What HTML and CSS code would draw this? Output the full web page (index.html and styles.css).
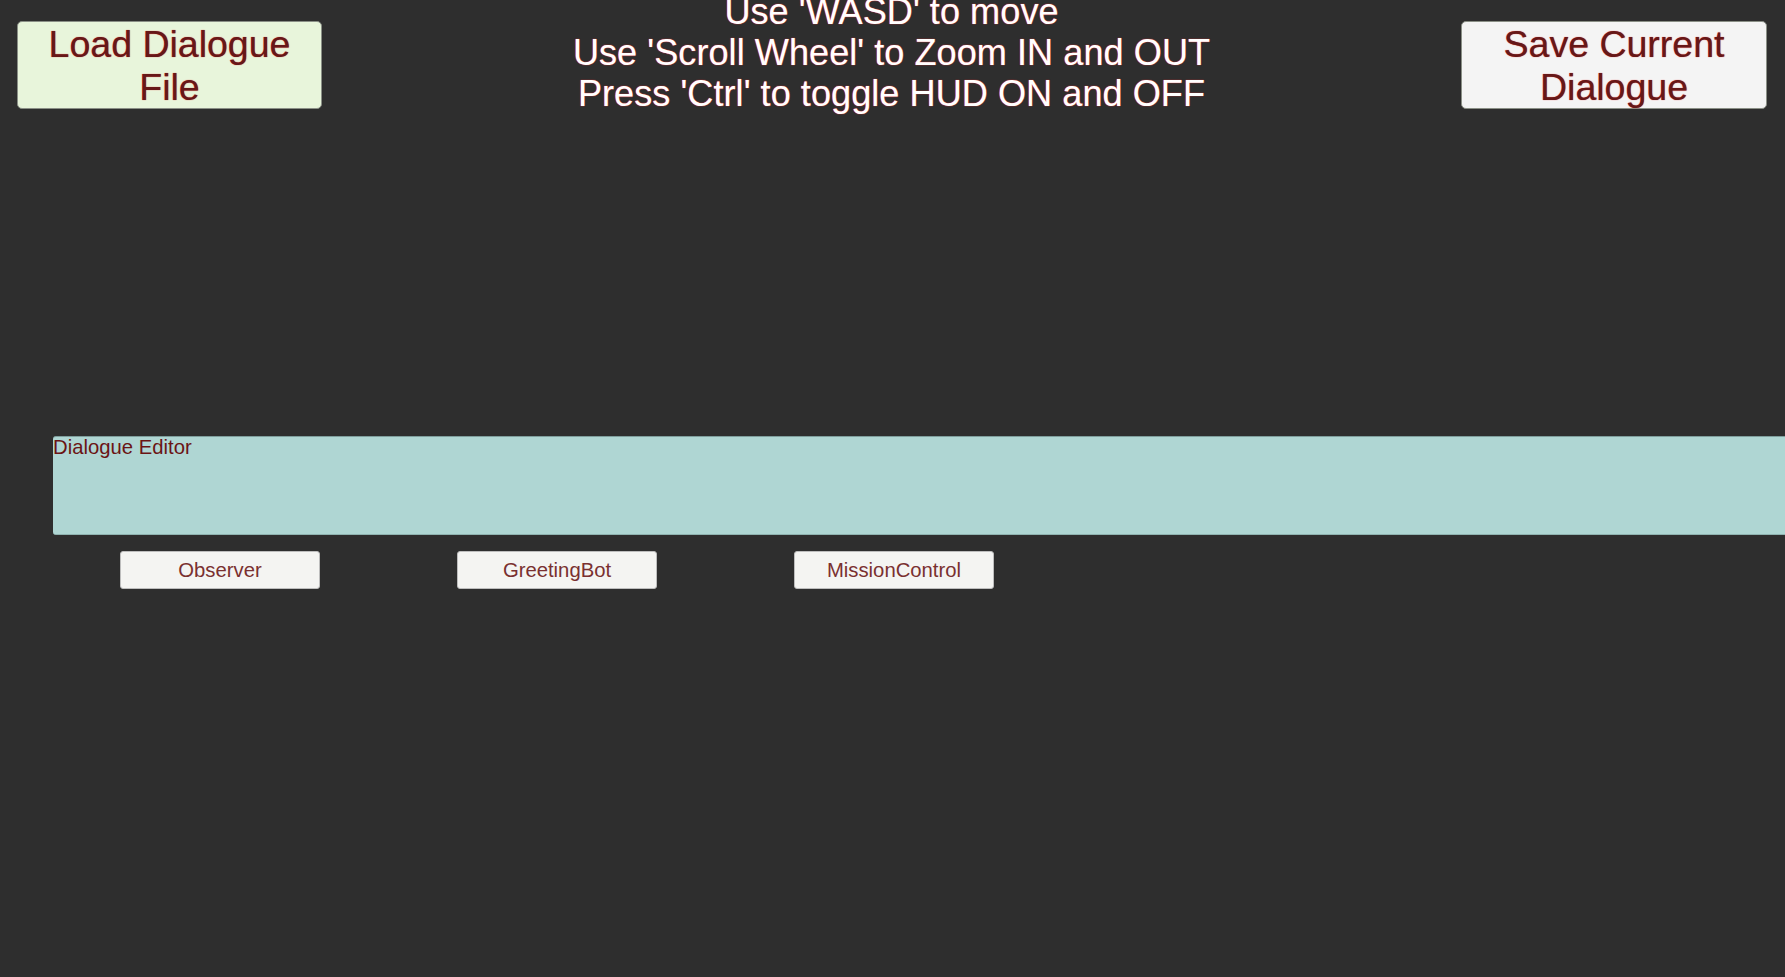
FILE: index.html
```html
<!DOCTYPE html>
<html>
<head>
<meta charset="utf-8">
<link rel="stylesheet" href="styles.css">
</head>
<body>
<div class="screen">
  <header class="hud">
    <div class="big-btn load">Load Dialogue<br>File</div>
    <div class="hint">Use 'WASD' to move<br>Use 'Scroll Wheel' to Zoom IN and OUT<br>Press 'Ctrl' to toggle HUD ON and OFF</div>
    <div class="big-btn save">Save Current<br>Dialogue</div>
  </header>
  <section class="editor">
    <div class="editor-bar">Dialogue Editor</div>
    <div class="speakers">
      <div class="speaker">Observer</div>
      <div class="speaker">GreetingBot</div>
      <div class="speaker">MissionControl</div>
    </div>
  </section>
</div>
</body>
</html>
```

FILE: styles.css
```css
html, body {
  margin: 0;
  padding: 0;
  background: #2e2e2e;
  overflow: hidden;
}
.screen {
  width: 1785px;
  height: 977px;
  font-family: "Liberation Sans", Arial, sans-serif;
}
.hud {
  display: flex;
  justify-content: space-between;
  align-items: flex-start;
  padding: 21px 18px 0 17px;
  height: 88px;
}
.big-btn {
  width: 305px;
  height: 88px;
  box-sizing: border-box;
  border-radius: 5px;
  display: flex;
  align-items: center;
  justify-content: center;
  text-align: center;
  font-size: 37.5px;
  line-height: 43px;
  padding-top: 2px;
  color: #661818;
  text-shadow: 0 0 1px #e03030;
  border: 1px solid #8a8f86;
}
.load {
  background: #e8f5db;
}
.save {
  background: #f4f4f4;
  width: 306px;
}
.hint {
  margin-top: -30px;
  text-align: center;
  font-size: 36.2px;
  line-height: 41px;
  color: #ffffff;
  text-shadow: 0 0 1px #e03a3a, 0 0 1px #e03a3a;
}
.editor {
  margin-top: 327px;
  padding-left: 53px;
}
.editor-bar {
  height: 99px;
  box-sizing: border-box;
  background: #afd6d3;
  border-top: 1px solid #7f9e9c;
  border-bottom: 1px solid #8fb3b0;
  border-radius: 3px 0 0 3px;
  color: #6b1414;
  font-size: 20.3px;
  line-height: 20px;
  padding-top: 0;
}
.speakers {
  display: flex;
  gap: 137px;
  margin-top: 16px;
  padding-left: 67px;
}
.speaker {
  width: 200px;
  height: 38px;
  box-sizing: border-box;
  background: #f4f4f2;
  border-radius: 3px;
  border: 1px solid #bdbdbd;
  display: flex;
  align-items: center;
  justify-content: center;
  color: #7a3030;
  font-size: 20.3px;
}
```
